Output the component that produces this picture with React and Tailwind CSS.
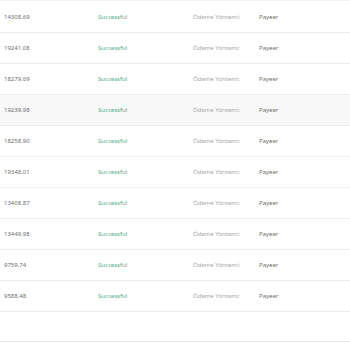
export default function App() {
  const amounts = [
    "14308.69",
    "19241.08",
    "18279.69",
    "19239.98",
    "18258.90",
    "19348.01",
    "13408.87",
    "13449.98",
    "9759.74",
    "9588.48",
  ];

  return (
    <div
      className="w-[350px] h-[350px] bg-white overflow-hidden"
      style={{ fontFamily: '"Noto Sans", "Open Sans", sans-serif' }}
    >
      <div className="pt-[1px] border-t border-[#f3f3f3]">
        {amounts.map((amount, i) => (
          <div
            key={amount}
            className={`h-[31px] flex items-center border-b border-[#eeeeee] text-[6px] ${
              i === 3 ? "bg-[#f8f8f8]" : "bg-white"
            }`}
          >
            <div className="w-[98px] pl-[4px] text-[#6f6f6f]">{amount}</div>
            <div className="w-[95px] text-[#4eae84]">Successful</div>
            <div className="w-[66px] text-[#a8a8a8]">Ödeme Yöntemi:</div>
            <div className="text-[#6f6f6f]">Payeer</div>
          </div>
        ))}
      </div>
      <div className="h-[30px] border-b border-[#e8e8e8]" />
    </div>
  );
}
